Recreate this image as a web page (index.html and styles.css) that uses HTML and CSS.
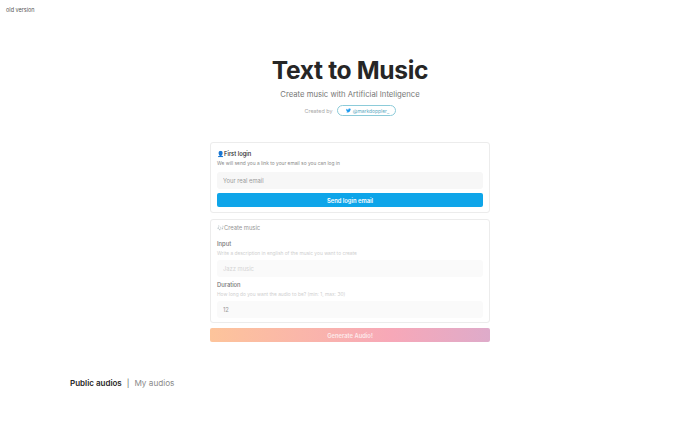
FILE: index.html
```html
<!DOCTYPE html>
<html lang="en">
  <head>
    <meta charset="UTF-8" />
    <meta name="viewport" content="width=device-width, initial-scale=1.0" />
    <title>Text to Music</title>
    <link rel="stylesheet" href="styles.css">
  </head>
  <body>
    <a class="old-link" href="#">old version</a>

    <!-- Title -->
    <header class="hero">
      <h1>Text to Music</h1>
      <p class="subtitle">Create music with Artificial Inteligence</p>
      <div class="credit">
        <span>Created by</span>
        <a class="twitter-pill" href="#">
          <svg class="twitter-icon" viewBox="0 0 24 24" aria-hidden="true">
            <path d="M23.95 4.57a10 10 0 0 1-2.82.77 4.96 4.96 0 0 0 2.16-2.72 9.9 9.9 0 0 1-3.12 1.19 4.92 4.92 0 0 0-8.38 4.48A13.98 13.98 0 0 1 1.64 3.16a4.92 4.92 0 0 0 1.52 6.57 4.9 4.9 0 0 1-2.23-.61v.06a4.92 4.92 0 0 0 3.95 4.83 5 5 0 0 1-2.21.08 4.94 4.94 0 0 0 4.6 3.42A9.87 9.87 0 0 1 0 19.54a14 14 0 0 0 7.56 2.21c9.05 0 14-7.5 14-13.98 0-.21 0-.42-.02-.63a9.94 9.94 0 0 0 2.41-2.57z" />
          </svg>
          @markdoppler_
        </a>
      </div>
    </header>

    <main class="column">
      <!-- Login -->
      <section class="card card-login">
        <h2><span class="emoji">👤</span>First login</h2>
        <p class="hint">We will send you a link to your email so you can log in</p>
        <input class="field" type="email" placeholder="Your real email" />
        <button class="send-btn">Send login email</button>
      </section>

      <!-- Disabled until logged in -->
      <section class="card card-create">
        <h2><span class="emoji">🎶</span>Create music</h2>
        <label class="label">Input</label>
        <p class="hint">Write a description in english of the music you want to create</p>
        <input class="field" type="text" placeholder="Jazz music" />
        <label class="label">Duration</label>
        <p class="hint">How long do you want the audio to be? (min: 1, max: 30)</p>
        <input class="field" type="text" value="12" />
      </section>

      <button class="generate-btn">Generate Audio!</button>
    </main>

    <nav class="tabs">
      <a class="tab active" href="#">Public audios</a>
      <span class="divider">|</span>
      <a class="tab" href="#">My audios</a>
    </nav>
  </body>
</html>
```

FILE: styles.css
```css
body {
  font-family: "Inter", "Liberation Sans", sans-serif;
  background: #fff;
  color: #262626;
  margin: 0;
  padding: 0;
  height: 438px;
  overflow: hidden;
}
a {
  color: inherit;
  text-decoration: none;
}

.old-link {
  display: block;
  padding: 7px 0 0 6px;
  font-size: 5.5px;
  line-height: 7px;
  color: #555;
}

/* Title */
.hero {
  margin-top: 39px;
  text-align: center;
}
.hero h1 {
  margin: 0;
  font-size: 24.6px;
  line-height: 34px;
  font-weight: 700;
  letter-spacing: -0.35px;
}
.subtitle {
  margin: 2px 0 0;
  font-size: 7.7px;
  line-height: 12px;
  color: #777;
}
.credit {
  display: flex;
  justify-content: center;
  align-items: center;
  gap: 4px;
  margin-top: 4px;
  font-size: 5.4px;
  color: #a8a8a8;
}
.twitter-pill {
  display: flex;
  align-items: center;
  justify-content: center;
  gap: 2px;
  width: 59px;
  height: 11px;
  box-sizing: border-box;
  padding-left: 3px;
  border: 1px solid #8ccbd9;
  border-radius: 6px;
  font-size: 4.9px;
  color: #5aa9bf;
}
.twitter-icon {
  width: 5px;
  height: 5px;
  fill: #1d9bf0;
}

/* Cards */
.column {
  width: 280px;
  margin: 26px auto 0;
}
.card {
  box-sizing: border-box;
  border: 1px solid #ececec;
  border-radius: 3px;
  padding: 6px;
  margin-bottom: 5px;
}
.card-login {
  padding-bottom: 5px;
  margin-bottom: 6px;
}
.card h2 {
  display: flex;
  align-items: center;
  height: 9px;
  margin: 0;
  font-size: 5.8px;
  line-height: 9px;
  font-weight: 500;
}
.emoji {
  font-size: 5.8px;
}
.hint {
  margin: 2px 0 0;
  font-size: 4.85px;
  line-height: 7px;
  color: #8a8a8a;
}
.field {
  display: block;
  box-sizing: border-box;
  width: 100%;
  height: 17px;
  margin-top: 5px;
  padding: 0 6px;
  border: none;
  border-radius: 3px;
  background: #f7f7f7;
  font-family: inherit;
  font-size: 5.8px;
  color: #555;
}
.field::placeholder {
  color: #9a9a9a;
}
.send-btn {
  display: block;
  width: 100%;
  height: 14px;
  margin-top: 4px;
  padding: 0;
  border: none;
  border-radius: 2px;
  background: #0ea5e9;
  color: #fff;
  font-family: inherit;
  font-size: 5.8px;
  font-weight: 600;
}

/* Faded, not available yet */
.card-create {
  padding-top: 3px;
  padding-bottom: 4px;
}
.card-create h2 {
  color: #959595;
  font-weight: 400;
  margin-bottom: 8px;
}
.card-create .emoji {
  opacity: 0.4;
}
.card-create .label {
  display: block;
  margin-top: 4px;
  font-size: 5.8px;
  line-height: 8px;
  font-weight: 500;
  color: #777;
}
.card-create .hint {
  color: #cfcfcf;
}
.card-create .field {
  margin-top: 3px;
  background: #fafafa;
  color: #999;
}
.card-create .field::placeholder {
  color: #d4d4d4;
}

.generate-btn {
  display: block;
  width: 100%;
  height: 14px;
  padding: 0;
  border: none;
  border-radius: 2px;
  background: linear-gradient(to right, #fdc49b, #f7a8b8 65%, #deabca);
  color: rgba(255, 255, 255, 0.75);
  font-family: inherit;
  font-size: 5.8px;
  font-weight: 600;
}

/* Tabs */
.tabs {
  display: flex;
  align-items: center;
  gap: 5px;
  margin: 36px 0 0 70px;
  font-size: 8px;
  line-height: 11px;
}
.tab {
  font-size: 8.2px;
  color: #8a8a8a;
}
.tab.active {
  font-size: 8px;
  color: #262626;
  font-weight: 600;
}
.divider {
  color: #666;
}
```
